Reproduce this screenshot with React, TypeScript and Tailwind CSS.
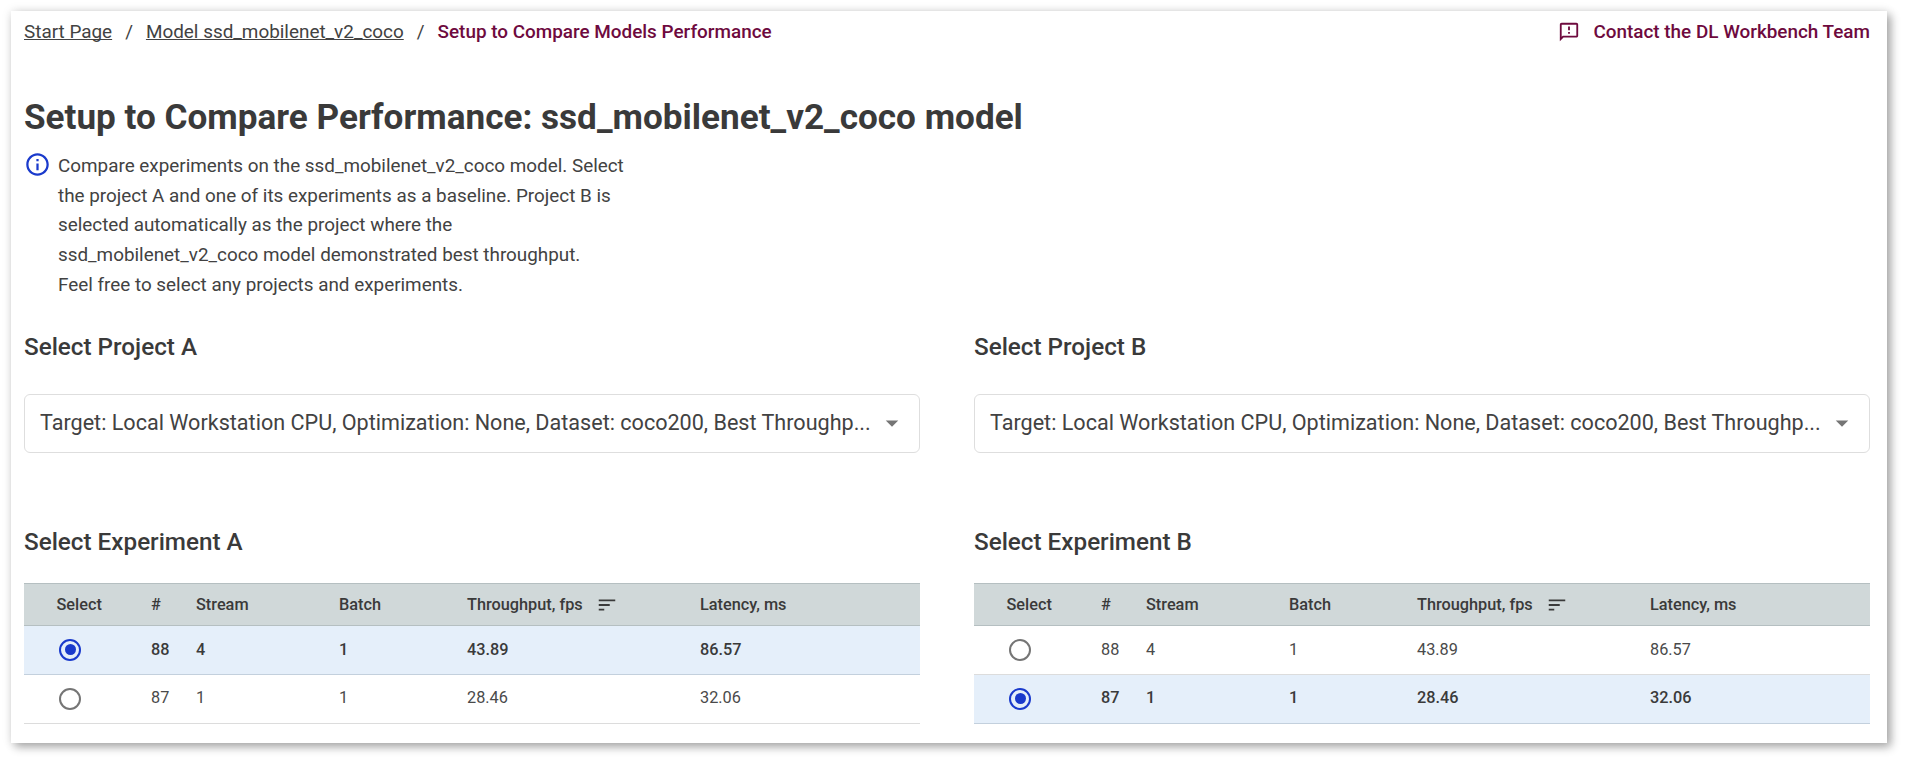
import React, { useState } from "react";
import { MdOutlineFeedback, MdOutlineInfo, MdArrowDropDown, MdSort } from "react-icons/md";

type Row = { id: number; stream: number; batch: number; fps: string; latency: string };

const rows: Row[] = [
  { id: 88, stream: 4, batch: 1, fps: "43.89", latency: "86.57" },
  { id: 87, stream: 1, batch: 1, fps: "28.46", latency: "32.06" },
];

const columns = "grid grid-cols-[94.5px_45px_143px_128px_233px_1fr] items-center pl-[32.5px]";

function Radio({ checked, onSelect }: { checked: boolean; onSelect: () => void }) {
  return (
    <button
      type="button"
      role="radio"
      aria-checked={checked}
      onClick={onSelect}
      className={`ml-[2.5px] flex size-[22px] items-center justify-center rounded-full border-2 ${
        checked ? "border-[#1a3acc]" : "border-[#757575]"
      }`}
    >
      {checked && <span className="size-[11px] rounded-full bg-[#1a3acc]" />}
    </button>
  );
}

function ExperimentTable({ initial }: { initial: number }) {
  const [selected, setSelected] = useState(initial);
  return (
    <div className="text-[16.3px]">
      <div className={`${columns} h-[43px] border-y border-[#b5bfc1] bg-[#d0d8d9] pt-[3px] font-medium`}>
        <span>Select</span>
        <span>#</span>
        <span>Stream</span>
        <span>Batch</span>
        <span className="flex items-center">
          Throughput, fps
          <MdSort className="mt-[-2px] ml-[13px] size-[22px]" />
        </span>
        <span>Latency, ms</span>
      </div>
      {rows.map((row, index) => {
        const active = row.id === selected;
        const cell = index === 0 ? "pt-[2px]" : "";
        return (
          <div
            key={row.id}
            className={`${columns} h-[49px] border-b ${
              active ? "border-[#c3d0dd] bg-[#e5effa] font-medium" : "border-[#dcdcdc] text-[#4a4a4a]"
            }`}
          >
            <Radio checked={active} onSelect={() => setSelected(row.id)} />
            <span className={cell}>{row.id}</span>
            <span className={cell}>{row.stream}</span>
            <span className={cell}>{row.batch}</span>
            <span className={cell}>{row.fps}</span>
            <span className={cell}>{row.latency}</span>
          </div>
        );
      })}
    </div>
  );
}

function ProjectColumn({ name, initial }: { name: string; initial: number }) {
  return (
    <section>
      <h2 className="text-[24.25px] leading-8 font-medium">Select Project {name}</h2>
      <button
        type="button"
        className="mt-[31px] flex h-[59px] w-full items-center rounded-[6px] border border-[#dedede] pr-[12.5px] pl-[15px] text-left text-[21.58px] text-[#424242]"
      >
        <span className="flex-1 whitespace-nowrap">
          Target: Local Workstation CPU, Optimization: None, Dataset: coco200, Best Throughp...
        </span>
        <MdArrowDropDown className="size-[30px] shrink-0 text-[#757575]" />
      </button>
      <h2 className="mt-[73px] mb-[25px] text-[24.25px] leading-8 font-medium">Select Experiment {name}</h2>
      <ExperimentTable initial={initial} />
    </section>
  );
}

export default function App() {
  return (
    <div className="h-[762px] overflow-hidden bg-white p-[11px] font-['Roboto',sans-serif] text-[#3a3a3a]">
      <main className="h-[732px] w-[1876px] bg-white pr-[17px] pl-[13px] shadow-[4px_4px_9px_rgba(0,0,0,0.32),0_0_10px_rgba(0,0,0,0.1)]">
        <header className="flex h-[42px] items-center justify-between text-[18.9px] text-[#424242]">
          <nav className="flex items-center">
            <a className="underline decoration-1 underline-offset-1 [text-decoration-skip-ink:none]">Start Page</a>
            <span className="mx-[13px]">/</span>
            <a className="underline decoration-1 underline-offset-1 [text-decoration-skip-ink:none]">
              Model ssd_mobilenet_v2_coco
            </a>
            <span className="mx-[13px]">/</span>
            <span className="font-medium text-[#6e0a3e]">Setup to Compare Models Performance</span>
          </nav>
          <a className="flex items-center font-medium text-[#6e0a3e]">
            <MdOutlineFeedback className="mr-[13px] size-[22px]" />
            Contact the DL Workbench Team
          </a>
        </header>
        <h1 className="mt-[42px] text-[35.12px] leading-[44px] font-bold">
          Setup to Compare Performance: ssd_mobilenet_v2_coco model
        </h1>
        <div className="mt-[12px] flex">
          <MdOutlineInfo className="size-[27px] text-[#1a3acc]" />
          <p className="ml-[7px] text-[18.87px] leading-[29.7px] text-[#424242]">
            Compare experiments on the ssd_mobilenet_v2_coco model. Select
            <br />
            the project A and one of its experiments as a baseline. Project B is
            <br />
            selected automatically as the project where the
            <br />
            ssd_mobilenet_v2_coco model demonstrated best throughput.
            <br />
            Feel free to select any projects and experiments.
          </p>
        </div>
        <div className="mt-[31px] grid grid-cols-2 gap-[54px]">
          <ProjectColumn name="A" initial={88} />
          <ProjectColumn name="B" initial={87} />
        </div>
      </main>
    </div>
  );
}
